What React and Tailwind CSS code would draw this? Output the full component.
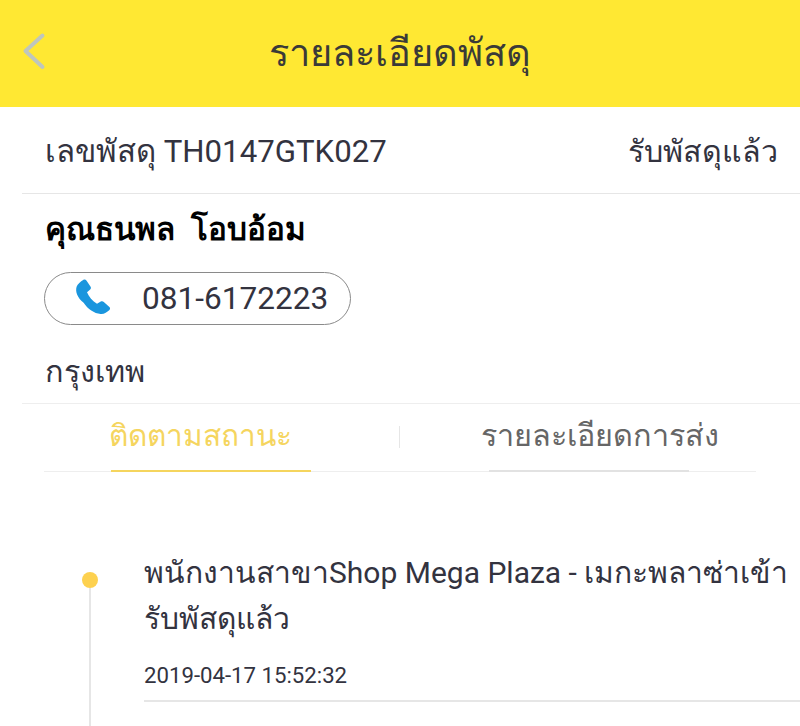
export default function App() {
  return (
    <div className="w-[800px] h-[726px] overflow-hidden bg-white text-[#33333f] flex flex-col font-['Roboto','Noto_Sans',sans-serif]">
      <header className="h-[107px] shrink-0 bg-[#ffe833] flex items-center justify-center relative">
        <svg className="absolute left-[22px] top-[32px]" width="24" height="38" viewBox="0 0 24 38" fill="none">
          <path d="M20.5 3.5 L3.500 19 L20.5 35" stroke="#bfc6bd" strokeWidth="4" strokeLinecap="round" strokeLinejoin="round" />
        </svg>
        <span className="text-[38px] leading-[44px] text-[#3a3a38] pb-[2px]">รายละเอียดพัสดุ</span>
      </header>

      <div className="ml-[22px] h-[87px] shrink-0 border-b border-[#e6e6e6] flex items-center justify-between pl-[23px] pr-[22px] pt-[3px]">
        <span className="text-[31.200px] leading-[36px]">เลขพัสดุ TH0147GTK027</span>
        <span className="text-[30.400px] leading-[36px]">รับพัสดุแล้ว</span>
      </div>

      <div className="pl-[45px] pt-[16px] h-[209px] shrink-0 flex flex-col items-start">
        <div className="text-[31.400px] leading-[40px] font-bold text-black">คุณธนพล&nbsp; โอบอ้อม</div>
        <div className="mt-[22px] -ml-px w-[307px] h-[53px] rounded-full border border-[#8a8a8a] flex items-center pl-[25px]">
          <svg width="48" height="43" viewBox="0 0 24 24" preserveAspectRatio="none" fill="#1a96de" className="-mt-[3px] shrink-0">
            <path d="M6.600 2.200c.6-.4 1.300-.2 1.700.4l2 3.400c.3.5.2 1.100-.2 1.500l-1.600 1.500c.9 2.400 2.800 5 5 6.500l1.900-1.200c.5-.3 1.100-.2 1.500.2l2.800 2.800c.5.5.4 1.300-.1 1.800-1.100.9-2.500 2.300-4.300 2.100-3.300-.4-6.300-2.700-8.500-6.300C3.500 12 2.600 8.500 3.300 6c.5-1.600 2-2.900 3.300-3.800z" />
          </svg>
          <span className="ml-[24px] text-[31.600px] leading-[36px]">081-6172223</span>
        </div>
        <div className="mt-[27px] text-[30.600px] leading-[40px]">กรุงเทพ</div>
      </div>

      <div className="ml-[22px] border-t border-[#eeeeee] h-[69px] shrink-0 flex items-stretch">
        <div className="w-[378px] relative flex items-center justify-center">
          <div className="absolute left-[22px] right-0 bottom-0 h-px bg-[#eeeeee]" />
          <div className="absolute left-[89px] w-[200px] bottom-0 h-[2px] bg-[#f5d55e]" />
          <span className="text-[29.800px] leading-[36px] text-[#f5d55e] pb-[4px] pr-[22px]">ติดตามสถานะ</span>
          <div className="absolute right-0 top-[22px] h-[22px] w-px bg-[#e6e6e6]" />
        </div>
        <div className="w-[356px] relative flex items-center justify-center">
          <div className="absolute left-0 right-0 bottom-0 h-px bg-[#eeeeee]" />
          <div className="absolute left-[89px] w-[200px] bottom-0 h-[2px] bg-[#e2e2e2]" />
          <span className="text-[30.600px] leading-[36px] text-[#666666] pb-[4px] pl-[43px]">รายละเอียดการส่ง</span>
        </div>
      </div>

      <div className="flex flex-1 min-h-0 relative">
        <div className="w-[144px] shrink-0 relative">
          <div className="absolute left-[82px] top-[100px] w-[16px] h-[16px] rounded-full bg-[#fdd14f]" />
          <div className="absolute left-[89px] top-[116px] bottom-0 w-[2px] bg-[#e6e6e6]" />
        </div>
        <div className="flex-1 min-w-0 self-start pt-[78px]">
          <div className="text-[30px] leading-[46px] whitespace-nowrap">พนักงานสาขาShop Mega Plaza - เมกะพลาซ่าเข้า<br />รับพัสดุแล้ว</div>
          <div className="mt-[19px] text-[22.200px] leading-[28px]">2019-04-17 15:52:32</div>
          <div className="mt-[11px] h-[2px] bg-[#e6e6e6]" />
        </div>
      </div>
    </div>
  );
}
